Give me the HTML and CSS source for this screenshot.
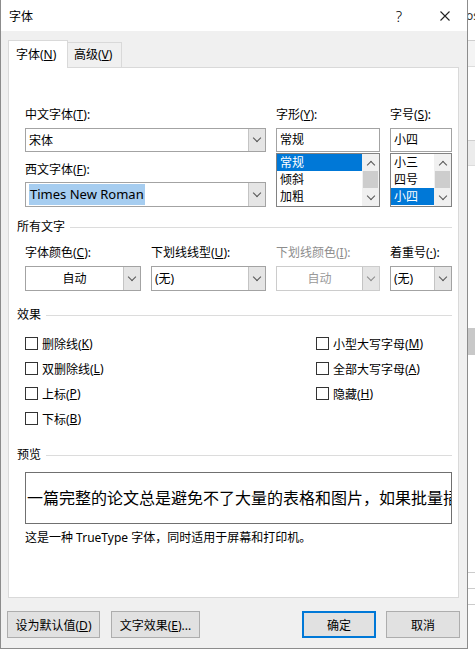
FILE: index.html
```html
<!DOCTYPE html>
<html lang="zh-CN">
<head>
    <meta charset="UTF-8">
    <meta name="viewport" content="width=device-width, initial-scale=1.0">
    <title>字体</title>
    <link rel="stylesheet" href="styles.css">
</head>
<body>
    <div class="dialog">
        <div class="titlebar">
            <span class="title">字体</span>
            <span class="help">?</span>
            <svg class="close" width="10" height="10" viewBox="0 0 10 10"><path d="M0.5 0.5L9.5 9.5M9.5 0.5L0.5 9.5" stroke="#222" stroke-width="1.1" fill="none"/></svg>
        </div>

        <div class="tabs">
            <div class="tab active">字体(<u>N</u>)</div>
            <div class="tab">高级(<u>V</u>)</div>
        </div>

        <div class="panel">
            <!-- font / style / size -->
            <div class="font-grid">
                <div class="col">
                    <div class="label">中文字体(<u>T</u>):</div>
                    <div class="combo short"><span class="value">宋体</span><span class="drop"></span></div>
                    <div class="label second">西文字体(<u>F</u>):</div>
                    <div class="combo"><span class="value"><span class="picked">Times New Roman</span></span><span class="drop"></span></div>
                </div>
                <div class="col">
                    <div class="label">字形(<u>Y</u>):</div>
                    <div class="field">常规</div>
                    <div class="list">
                        <div class="items">
                            <div class="item active">常规</div>
                            <div class="item">倾斜</div>
                            <div class="item">加粗</div>
                        </div>
                        <div class="scrollbar"><span class="arrow up"></span><span class="track"><span class="thumb"></span></span><span class="arrow down"></span></div>
                    </div>
                </div>
                <div class="col">
                    <div class="label">字号(<u>S</u>):</div>
                    <div class="field">小四</div>
                    <div class="list">
                        <div class="items">
                            <div class="item">小三</div>
                            <div class="item">四号</div>
                            <div class="item active">小四</div>
                        </div>
                        <div class="scrollbar"><span class="arrow up"></span><span class="track"><span class="thumb"></span></span><span class="arrow down"></span></div>
                    </div>
                </div>
            </div>

            <div class="group first">所有文字</div>
            <div class="attr-row">
                <div class="cell">
                    <div class="label">字体颜色(<u>C</u>):</div>
                    <div class="combo"><span class="value center">自动</span><span class="drop"></span></div>
                </div>
                <div class="cell">
                    <div class="label">下划线线型(<u>U</u>):</div>
                    <div class="combo"><span class="value">(无)</span><span class="drop"></span></div>
                </div>
                <div class="cell disabled">
                    <div class="label">下划线颜色(<u>I</u>):</div>
                    <div class="combo"><span class="value center">自动</span><span class="drop"></span></div>
                </div>
                <div class="cell">
                    <div class="label">着重号(<u>·</u>):</div>
                    <div class="combo"><span class="value">(无)</span><span class="drop"></span></div>
                </div>
            </div>

            <div class="group">效果</div>
            <div class="checks">
                <div class="check"><span class="box"></span>删除线(<u>K</u>)</div>
                <div class="check"><span class="box"></span>双删除线(<u>L</u>)</div>
                <div class="check"><span class="box"></span>上标(<u>P</u>)</div>
                <div class="check"><span class="box"></span>下标(<u>B</u>)</div>
                <div class="check"><span class="box"></span>小型大写字母(<u>M</u>)</div>
                <div class="check"><span class="box"></span>全部大写字母(<u>A</u>)</div>
                <div class="check"><span class="box"></span>隐藏(<u>H</u>)</div>
            </div>

            <div class="group">预览</div>
            <div class="preview">一篇完整的论文总是避免不了大量的表格和图片，如果批量插入</div>
            <div class="note">这是一种 TrueType 字体，同时适用于屏幕和打印机。</div>
        </div>

        <div class="buttons">
            <button class="btn wide">设为默认值(<u>D</u>)</button>
            <button class="btn effects">文字效果(<u>E</u>)...</button>
            <button class="btn ok">确定</button>
            <button class="btn">取消</button>
        </div>
    </div>

    <!-- window behind the dialog -->
    <div class="backdrop">
        <div class="bg-text">os</div>
        <div class="bg-band"></div>
        <div class="bg-band two"></div>
        <div class="bg-thumb"></div>
        <div class="bg-line"></div>
        <div class="bg-line near"></div>
        <div class="bg-line near"></div>
    </div>
</body>
</html>
```

FILE: styles.css
```css
* {
    box-sizing: border-box;
}

body {
    margin: 0;
    display: flex;
    font-family: "Noto Sans", "Noto Sans CJK SC", sans-serif;
    font-size: 12px;
    color: #000;
    background: #fff;
}

u {
    text-decoration: underline;
    text-underline-offset: 1px;
}

.dialog {
    flex: none;
    width: 468px;
    height: 649px;
    border: 1px solid #8c8c8c;
    border-top: none;
    background: #f0f0f0;
}

/* title bar */
.titlebar {
    height: 31px;
    background: #fff;
    display: flex;
    align-items: center;
}

.title {
    margin-left: 8px;
}

.help {
    margin-left: auto;
    width: 12px;
    text-align: center;
    font-size: 15px;
    font-weight: 300;
}

.close {
    margin-left: 35px;
    margin-right: 17px;
}

/* tabs */
.tabs {
    height: 36px;
    display: flex;
    align-items: flex-end;
    padding-left: 7px;
}

.tab {
    height: 25px;
    width: 54px;
    line-height: 24px;
    padding-left: 6px;
    border: 1px solid #d9d9d9;
    border-bottom: none;
    border-left: none;
    background: #f0f0f0;
    white-space: nowrap;
}

.tab.active {
    position: relative;
    z-index: 1;
    width: 60px;
    height: 28px;
    margin-bottom: -1px;
    line-height: 28px;
    padding-left: 7px;
    border-left: 1px solid #d9d9d9;
    background: #fff;
}

.panel {
    margin: 0 8px 0 7px;
    padding: 39px 6px 51px 16px;
    background: #fff;
    border: 1px solid #d9d9d9;
}

.label {
    height: 16px;
    line-height: 16px;
    margin-bottom: 5px;
    white-space: nowrap;
}

.label.second {
    margin-top: 10px;
    margin-bottom: 4px;
}

/* font / style / size */
.font-grid {
    display: grid;
    grid-template-columns: 241px 104px 62px;
    column-gap: 10px;
}

.combo {
    display: flex;
    height: 25px;
    border: 1px solid #a3a3a3;
    background: #fff;
}

.combo.short,
.field {
    height: 24px;
}

.field {
    border: 1px solid #a3a3a3;
    padding-left: 3px;
    line-height: 22px;
}

.value {
    flex: 1;
    padding-left: 3px;
    line-height: 23px;
    overflow: hidden;
    white-space: nowrap;
}

.value.center {
    text-align: center;
    padding-left: 0;
}

.picked {
    background: #a6cdf0;
    font-size: 13px;
    padding: 1px 1px 2px;
}

.drop {
    width: 17px;
    background: #e5e5e5;
    border-left: 1px solid #c4c4c4;
    display: flex;
    align-items: center;
    justify-content: center;
}

.drop::after {
    content: "";
    width: 5px;
    height: 5px;
    border-right: 1px solid #555;
    border-bottom: 1px solid #555;
    transform: translateY(-2px) rotate(45deg);
}

.list {
    margin-top: 1px;
    height: 54px;
    border: 1px solid #828282;
    display: flex;
}

.items {
    flex: 1;
    overflow: hidden;
}

.item {
    height: 17px;
    line-height: 17px;
    padding-left: 3px;
    white-space: nowrap;
}

.item.active {
    background: #0078d7;
    color: #fff;
}

.scrollbar {
    width: 17px;
    background: #f0f0f0;
    display: flex;
    flex-direction: column;
}

.arrow {
    height: 17px;
    display: flex;
    align-items: center;
    justify-content: center;
}

.arrow::after {
    content: "";
    width: 5px;
    height: 5px;
    border-right: 1.5px solid #555;
    border-bottom: 1.5px solid #555;
}

.arrow.up::after {
    transform: translateY(2px) rotate(-135deg);
}

.arrow.down::after {
    transform: translateY(-2px) rotate(45deg);
}

.track {
    flex: 1;
}

.thumb {
    display: block;
    height: 17px;
    margin: 0 1px;
    background: #cdcdcd;
}

/* group headers */
.group {
    display: flex;
    align-items: center;
    height: 16px;
    line-height: 16px;
    margin: 16px 0 0 -8px;
}

.group.first {
    margin-top: 12px;
}

.group::after {
    content: "";
    flex: 1;
    height: 1px;
    margin-left: 5px;
    background: #dcdcdc;
}

.attr-row {
    display: grid;
    grid-template-columns: 116px 115px 104px 62px;
    column-gap: 10px;
    margin-top: 10px;
}

.disabled .label {
    color: #8d8d8d;
}

.disabled .combo {
    border-color: #cccccc;
}

.disabled .value {
    color: #9a9a9a;
}

.disabled .drop::after {
    border-color: #8a8a8a;
}

/* effects */
.checks {
    display: grid;
    grid-template-columns: 291px auto;
    grid-template-rows: repeat(4, 25px);
    grid-auto-flow: column;
    margin-top: 8px;
}

.check {
    display: flex;
    align-items: center;
    white-space: nowrap;
}

.box {
    width: 13px;
    height: 13px;
    margin-right: 4px;
    border: 1px solid #333;
    background: #fff;
}

/* preview */
.preview {
    margin-top: 9px;
    height: 52px;
    border: 1px solid #707070;
    padding-left: 1px;
    font-size: 16px;
    line-height: 50px;
    white-space: nowrap;
    overflow: hidden;
}

.note {
    margin-top: 6px;
    line-height: 16px;
}

/* bottom buttons */
.buttons {
    display: flex;
    gap: 11px;
    margin-top: 13px;
    padding: 0 7px 0 6px;
}

.btn {
    height: 27px;
    width: 74px;
    padding: 0;
    border: 1px solid #adadad;
    background: #e1e1e1;
    font: inherit;
    color: #000;
    white-space: nowrap;
}

.btn.wide {
    width: 93px;
}

.btn.effects {
    width: 89px;
}

.btn.ok {
    margin-left: auto;
    margin-right: -1px;
    border: 2px solid #0078d7;
}

/* window behind */
.backdrop {
    flex: 1;
    overflow: hidden;
    background: #fff;
}

.bg-text {
    height: 31px;
    line-height: 31px;
    margin-left: -2px;
    color: #333;
}

.bg-band {
    margin-top: 9px;
    height: 27px;
    background: #f4f4f4;
    border-top: 1px solid #cfcfcf;
    border-bottom: 1px solid #dcdcdc;
}

.bg-band.two {
    margin-top: 73px;
    height: 26px;
    background: #ececec;
}

.bg-thumb {
    margin-top: 162px;
    height: 27px;
    background: #c8c8c8;
}

.bg-line {
    margin-top: 217px;
    height: 1px;
    background: #cccccc;
}

.bg-line.near {
    margin-top: 15px;
}
```
